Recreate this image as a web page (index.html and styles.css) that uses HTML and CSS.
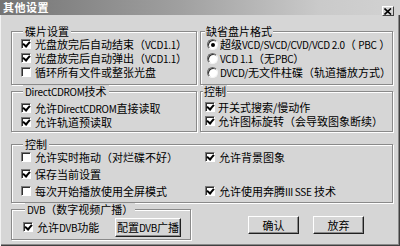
FILE: index.html
```html
<!DOCTYPE html>
<html lang="zh-CN">
<head>
  <meta charset="UTF-8" />
  <title>其他设置</title>
  <link rel="stylesheet" href="styles.css">
</head>
<body>
  <div class="window">
    <!-- Title bar -->
    <div class="titlebar">
      <span class="title">其他设置</span>
      <span class="close">
        <svg width="8" height="7" viewBox="0 0 8 7">
          <path d="M0.5 0.5 L7 6.5 M7 0.5 L0.5 6.5" stroke="#000" stroke-width="1.6" fill="none" />
        </svg>
      </span>
    </div>

    <div class="panel">
      <div class="row row-top">
        <fieldset class="group g-disc">
          <legend>碟片设置</legend>
          <label class="item"><span class="cb checked"></span><span>光盘放完后自动结束（<span class="en">VCD1.1</span>）</span></label>
          <label class="item"><span class="cb checked"></span><span>光盘放完后自动弹出（<span class="en">VCD1.1</span>）</span></label>
          <label class="item"><span class="cb"></span><span>循环所有文件或整张光盘</span></label>
        </fieldset>
        <fieldset class="group g-format">
          <legend>缺省盘片格式</legend>
          <label class="item"><span class="rb checked"></span><span>超级<span class="en">VCD/SVCD/CVD/VCD 2.0</span>（ <span class="en">PBC</span> ）</span></label>
          <label class="item"><span class="rb"></span><span><span class="en">VCD 1.1</span>（无<span class="en">PBC</span>）</span></label>
          <label class="item"><span class="rb"></span><span><span class="en">DVCD/</span>无文件柱碟（轨道播放方式）</span></label>
        </fieldset>
      </div>

      <div class="row row-mid">
        <fieldset class="group g-direct">
          <legend><span class="en">DirectCDROM</span>技术</legend>
          <label class="item"><span class="cb checked"></span><span>允许<span class="en">DirectCDROM</span>直接读取</span></label>
          <label class="item"><span class="cb checked"></span><span>允许轨道预读取</span></label>
        </fieldset>
        <fieldset class="group g-ctrl">
          <legend>控制</legend>
          <label class="item"><span class="cb checked"></span><span>开关式搜索/慢动作</span></label>
          <label class="item"><span class="cb checked"></span><span>允许图标旋转（会导致图象断续）</span></label>
        </fieldset>
      </div>

      <fieldset class="group g-control">
        <legend>控制</legend>
        <div class="grid">
          <label class="item"><span class="cb"></span><span>允许实时拖动（对烂碟不好）</span></label>
          <label class="item"><span class="cb checked"></span><span>允许背景图象</span></label>
          <label class="item"><span class="cb checked"></span><span>保存当前设置</span></label>
          <div></div>
          <label class="item"><span class="cb"></span><span>每次开始播放使用全屏模式</span></label>
          <label class="item"><span class="cb checked"></span><span>允许使用奔腾<span class="en">III SSE</span> 技术</span></label>
        </div>
      </fieldset>

      <div class="row row-bottom">
        <fieldset class="group g-dvb">
          <legend><span class="en">DVB</span>（数字视频广播）</legend>
          <div class="dvb-line">
            <label class="item"><span class="cb checked"></span><span>允许<span class="en">DVB</span>功能</span></label>
            <button class="btn btn-dvb">配置<span class="en">DVB</span>广播</button>
          </div>
        </fieldset>
        <div class="actions">
          <button class="btn">确认</button>
          <button class="btn">放弃</button>
        </div>
      </div>
    </div>
  </div>
</body>
</html>
```

FILE: styles.css
```css
* {
  box-sizing: border-box;
}

html, body {
  margin: 0;
  padding: 0;
  background-color: #d6d6d6;
  font-family: "Noto Sans CJK SC", "Liberation Sans", sans-serif;
  font-size: 11px;
  color: #000;
}

.window {
  width: 400px;
  height: 246px;
  overflow: hidden;
  background-color: #d6d6d6;
  box-shadow: inset 1px 1px 0 #f2f2f2, inset -1px -1px 0 #404040, inset -2px -2px 0 #8a8a8a;
}

/* latin runs are narrower in the old system font */
.en {
  font-size: 10px;
  letter-spacing: -0.3px;
}

/* title bar */
.titlebar {
  display: flex;
  justify-content: space-between;
  height: 15px;
  padding: 0 6px 0 3px;
  background: linear-gradient(to right, #747474, #a0a0a0 45%, #cacaca 80%, #d2d2d2);
}

.title {
  color: #fff;
  font-weight: bold;
  line-height: 14px;
  letter-spacing: 0.5px;
}

.close {
  align-self: flex-end;
  display: flex;
  align-items: center;
  justify-content: center;
  width: 12px;
  height: 10px;
  margin-bottom: -1px;
  background-color: #d6d6d6;
  border: 1px solid;
  border-color: #fff #404040 #404040 #fff;
}

.panel {
  padding: 10px 7px 0 11px;
}

.row {
  display: flex;
  gap: 3px;
}

/* group box */
.group {
  margin: 0;
  padding: 0;
  min-width: 0;
  border: 1px solid #8a8a8a;
  box-shadow: 1px 1px 0 #fff, inset 1px 1px 0 #fff;
}

.group legend {
  margin-left: 2px;
  padding: 0 2px;
  line-height: 12px;
  white-space: nowrap;
  background-color: #d6d6d6;
}

.g-format legend,
.g-ctrl legend {
  margin-left: -2px;
  padding: 0 1px;
}

.item {
  display: flex;
  align-items: center;
  height: 14px;
  line-height: 13px;
  white-space: nowrap;
}

.g-disc {
  width: 186px;
  height: 60px;
  padding-left: 9px;
}

.g-format {
  width: 193px;
  height: 60px;
  padding-left: 6px;
}

.row-mid .group {
  height: 47px;
  padding-top: 3px;
}

.g-direct {
  width: 186px;
  padding-left: 9px;
}

.g-ctrl {
  width: 193px;
  padding-left: 4px;
}

.g-ctrl .cb {
  margin-right: 3px;
}

.g-control {
  width: 382px;
  height: 65px;
  margin-top: 6px;
  padding-left: 9px;
}

.grid {
  display: grid;
  grid-template-columns: 184px 1fr;
  grid-auto-rows: 17px;
}

.row-bottom {
  gap: 0;
}

.g-dvb {
  width: 180px;
  height: 37px;
  padding: 1px 9px 0 11px;
}

.dvb-line {
  display: flex;
  align-items: center;
  justify-content: space-between;
  height: 20px;
}

.actions {
  display: flex;
  gap: 14px;
  margin-left: 57px;
  padding-top: 13px;
}

/* checkbox */
.cb {
  position: relative;
  flex: none;
  width: 10px;
  height: 10px;
  margin-right: 4px;
  background-color: #fff;
  border: 1px solid;
  border-color: #7a7a7a #fff #fff #7a7a7a;
  box-shadow: inset 1px 1px 0 #303030;
}

.cb.checked::after {
  content: "";
  position: absolute;
  left: 2px;
  top: 0px;
  width: 3px;
  height: 5px;
  border: solid #000;
  border-width: 0 2px 2px 0;
  transform: rotate(40deg);
}

/* radio */
.rb {
  position: relative;
  flex: none;
  width: 11px;
  height: 11px;
  margin-right: 2px;
  border-radius: 50%;
  background-color: #fff;
  border: 1px solid;
  border-color: #6a6a6a #f4f4f4 #f4f4f4 #6a6a6a;
  box-shadow: inset 1px 1px 0 #303030;
}

.rb.checked::after {
  content: "";
  position: absolute;
  left: 3px;
  top: 3px;
  width: 4px;
  height: 4px;
  border-radius: 50%;
  background-color: #000;
}

/* buttons */
.btn {
  height: 18px;
  width: 51px;
  padding: 0;
  font-family: inherit;
  font-size: 11px;
  line-height: 14px;
  white-space: nowrap;
  color: #000;
  background-color: #d6d6d6;
  border: 1px solid;
  border-color: #fff #202020 #202020 #fff;
  box-shadow: inset -1px -1px 0 #8a8a8a;
}

.btn-dvb {
  width: 66px;
  height: 19px;
}
```
